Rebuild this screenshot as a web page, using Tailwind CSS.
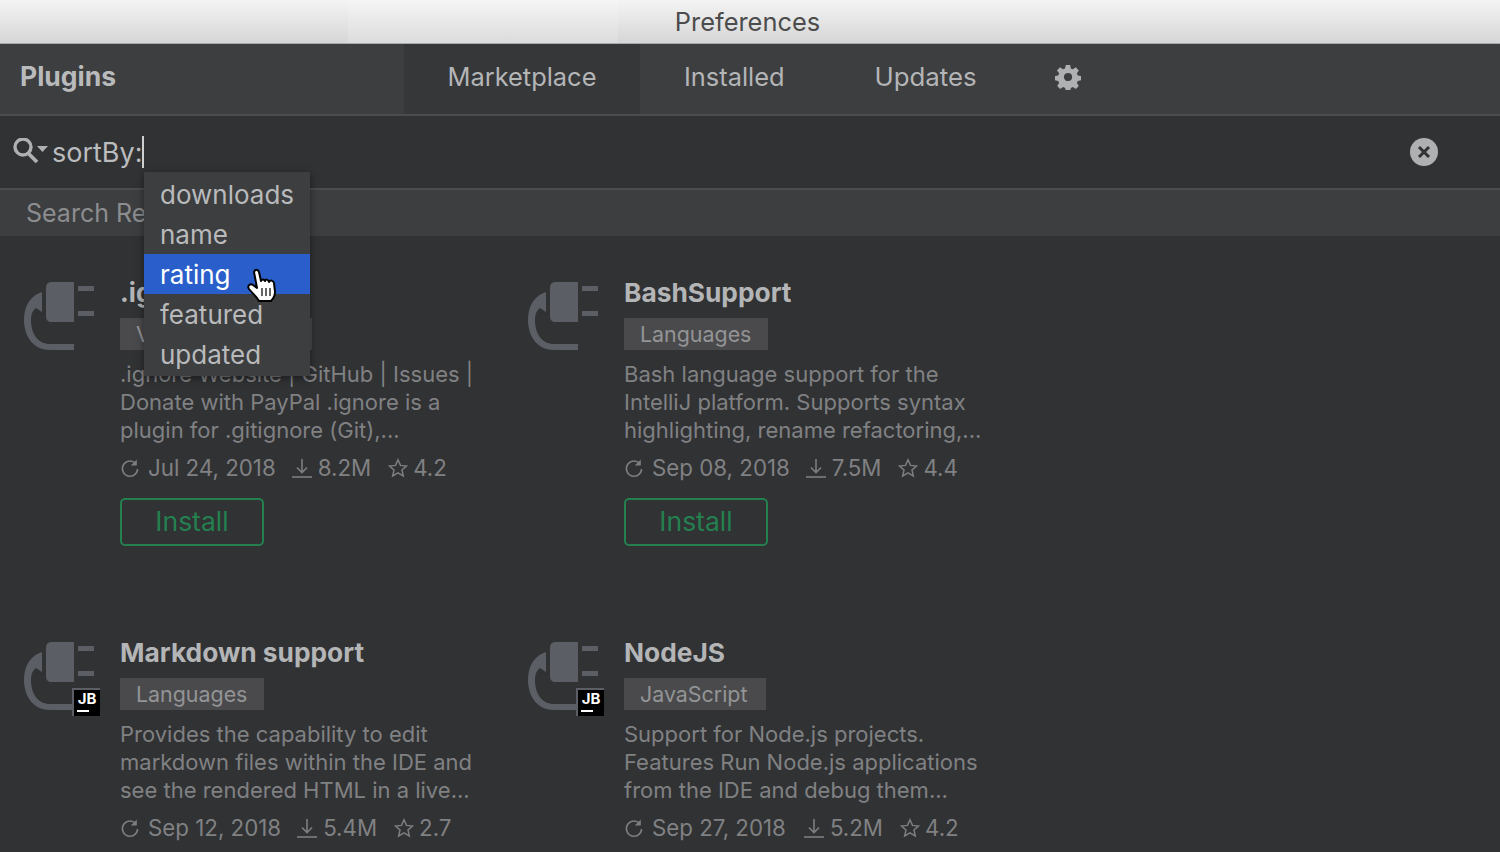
<!DOCTYPE html>
<html lang="en">
  <head>
    <meta charset="UTF-8" />
    <title>Preferences</title>
    <script src="https://cdn.jsdelivr.net/npm/@tailwindcss/browser@4"></script>
  </head>
  <body class="bg-[#313234] font-['Inter','Noto_Sans',sans-serif]">
    <svg class="hidden">
      <symbol id="plug" viewBox="0 0 70 68">
        <path d="M28 0h22v40H28c-4 0-6-2-6-6V6c0-4 2-6 6-6z" fill="#5b5f65" />
        <path d="M54 4h16v5H54zM54 29h16v5H54z" fill="#5b5f65" />
        <path d="M18 10C6 14 0 24 0 38c0 17 10 30 26 30h24v-6H26C14 62 7 52 7 38c0-6 2-10 5-12l6 4z" fill="#5b5f65" />
      </symbol>
      <symbol id="refresh" viewBox="0 0 20 20">
        <path d="M15.600 5.500A7.600 7.600 0 1 0 17.600 11" fill="none" stroke="#7d7e80" stroke-width="1.600" />
        <path d="M16.800 1.500v6h-6z" fill="#7d7e80" />
      </symbol>
      <symbol id="download" viewBox="0 0 20 20">
        <path d="M10 1v13M5 9.500l5 5 5-5" fill="none" stroke="#7d7e80" stroke-width="1.600" />
        <path d="M0 19h20" stroke="#7d7e80" stroke-width="1.600" />
      </symbol>
      <symbol id="star" viewBox="0 0 20 20">
        <path d="M10 1.800l2.500 5.600 6 .6-4.500 4 1.300 6-5.300-3.100-5.300 3.100 1.300-6-4.500-4 6-.6z" fill="none" stroke="#7d7e80" stroke-width="1.500" />
      </symbol>
    </svg>

    <div class="relative h-[852px] w-[1500px] overflow-hidden">
      <!-- title bar -->
      <header class="relative flex h-[44px] items-center justify-center bg-gradient-to-b from-[#f4f4f4] to-[#d6d6d6] border-b border-[#a9a9a9] pt-[2px]">
        <div class="absolute left-[348px] top-0 h-[43px] w-[270px] bg-white/15"></div>
        <span class="relative mr-[5px] text-[25.400px] text-[#4c4c4c]">Preferences</span>
      </header>

      <!-- tabs -->
      <nav class="flex h-[72px] bg-[#3d3e40] border-b-2 border-[#4b4c4e] text-[25.400px] text-[#b4b5b7]">
        <div class="flex w-[404px] items-center pb-[4px] pl-[20px] text-[26.500px] font-bold text-[#b9babc]">Plugins</div>
        <div class="flex w-[236px] items-center justify-center bg-[#363739] pb-[4px]">Marketplace</div>
        <div class="flex items-center pb-[4px] pl-[44px]">Installed</div>
        <div class="flex items-center pb-[4px] pl-[90px] text-[25.800px]">Updates</div>
        <div class="flex items-center pb-[4px] pl-[78px]">
          <svg width="26" height="26" viewBox="0 0 24 24" fill="#afb0b2">
            <path fill-rule="evenodd" d="M10 1h4l.6 3.100 1.900.8 2.700-1.800 2.800 2.800-1.800 2.700.8 1.900 3 .6v4l-3 .6-.8 1.900 1.800 2.700-2.800 2.800-2.700-1.800-1.900.8-.6 3h-4l-.6-3-1.900-.8-2.700 1.800-2.800-2.800 1.800-2.700-.8-1.900-3-.6v-4l3-.6.8-1.900L1.800 5.900l2.800-2.800 2.700 1.800 1.900-.8zM12 8.200a3.800 3.800 0 1 0 0 7.600 3.800 3.800 0 0 0 0-7.600z" />
          </svg>
        </div>
      </nav>

      <!-- search -->
      <div class="flex h-[74px] items-center border-b-2 border-[#4b4c4e] pl-[13px] pr-[62px]">
        <svg width="36" height="28" viewBox="0 0 36 28" fill="none">
          <circle cx="10" cy="9" r="8" stroke="#afb0b2" stroke-width="3.400" />
          <path d="M15 15l9 9" stroke="#afb0b2" stroke-width="3.800" />
          <path d="M24 8h11l-5.500 6z" fill="#afb0b2" />
        </svg>
        <span class="ml-[3px] pt-[2px] text-[27px] text-[#bbbcbe]">sortBy:</span>
        <span class="h-[32px] w-[2px] bg-[#d0d0d0]"></span>
        <svg width="28" height="28" viewBox="0 0 28 28" class="ml-auto">
          <circle cx="14" cy="14" r="14" fill="#afb0b2" />
          <path d="M9 9l10 10M19 9L9 19" stroke="#313234" stroke-width="3" />
        </svg>
      </div>

      <div class="flex h-[46px] items-center bg-[#3d3e40] pl-[26px] pt-[2px] text-[25px] text-[#8c8d8f]">Search Results</div>

      <!-- plugin grid -->
      <main class="grid grid-cols-[504px_504px] auto-rows-[360px] pt-[36px]">
        <article class="flex">
          <div class="relative ml-[24px] h-[78px] w-[96px]"><svg width="70" height="68" class="mt-[10px]"><use href="#plug" /></svg></div>
          <div class="w-[370px]">
            <h2 class="mt-[3px] text-[26.300px] leading-[36px] font-bold text-[#b4b5b7]">.ignore</h2>
            <span class="mt-[7px] block h-[32px] w-[192px] bg-[#4a4a4c] pl-[16px] text-[21.400px] leading-[32px] text-[#939496]">VCS Integration</span>
            <p class="mt-[10px] text-[22px] leading-[28px] text-[#808183]">.ignore Website | GitHub | Issues | Donate with PayPal .ignore is a plugin for .gitignore (Git),...</p>
            <div class="mt-[8px] flex h-[32px] items-center text-[22.300px] text-[#808183]">
              <svg width="20" height="20" class="mr-[8px]"><use href="#refresh" /></svg>Jul 24, 2018
              <svg width="20" height="20" class="mr-[6px] ml-[16px]"><use href="#download" /></svg>8.2M
              <svg width="20" height="20" class="mr-[5px] ml-[17px]"><use href="#star" /></svg>4.2
            </div>
            <button class="mt-[14px] block h-[48px] w-[144px] rounded-[5px] border-2 border-[#24804f] text-[26.500px] text-[#24804f]">Install</button>
          </div>
        </article>
        <article class="flex">
          <div class="relative ml-[24px] h-[78px] w-[96px]"><svg width="70" height="68" class="mt-[10px]"><use href="#plug" /></svg></div>
          <div class="w-[370px]">
            <h2 class="mt-[3px] text-[26.300px] leading-[36px] font-bold text-[#b4b5b7]">BashSupport</h2>
            <span class="mt-[7px] block h-[32px] w-[144px] bg-[#4a4a4c] pl-[16px] text-[21.400px] leading-[32px] text-[#939496]">Languages</span>
            <p class="mt-[10px] text-[22px] leading-[28px] text-[#808183]">Bash language support for the IntelliJ platform. Supports syntax highlighting, rename refactoring,...</p>
            <div class="mt-[8px] flex h-[32px] items-center text-[22.300px] text-[#808183]">
              <svg width="20" height="20" class="mr-[8px]"><use href="#refresh" /></svg>Sep 08, 2018
              <svg width="20" height="20" class="mr-[6px] ml-[16px]"><use href="#download" /></svg>7.5M
              <svg width="20" height="20" class="mr-[5px] ml-[17px]"><use href="#star" /></svg>4.4
            </div>
            <button class="mt-[14px] block h-[48px] w-[144px] rounded-[5px] border-2 border-[#24804f] text-[26.500px] text-[#24804f]">Install</button>
          </div>
        </article>
        <article class="flex">
          <div class="relative ml-[24px] h-[78px] w-[96px]">
            <svg width="70" height="68" class="mt-[10px]"><use href="#plug" /></svg>
            <span class="absolute left-[48px] top-[56px] flex h-[28px] w-[28px] flex-col items-center border-t-2 border-l-2 border-[#5b5f65] bg-black pt-[1px] text-[15px] leading-[16px] font-bold text-white">JB<span class="mt-[3px] mr-[8px] h-[2px] w-[12px] bg-white"></span></span>
          </div>
          <div class="w-[370px]">
            <h2 class="mt-[3px] text-[26.300px] leading-[36px] font-bold text-[#b4b5b7]">Markdown support</h2>
            <span class="mt-[7px] block h-[32px] w-[144px] bg-[#4a4a4c] pl-[16px] text-[21.400px] leading-[32px] text-[#939496]">Languages</span>
            <p class="mt-[10px] text-[22px] leading-[28px] text-[#808183]">Provides the capability to edit markdown files within the IDE and see the rendered HTML in a live...</p>
            <div class="mt-[8px] flex h-[32px] items-center text-[22.300px] text-[#808183]">
              <svg width="20" height="20" class="mr-[8px]"><use href="#refresh" /></svg>Sep 12, 2018
              <svg width="20" height="20" class="mr-[6px] ml-[16px]"><use href="#download" /></svg>5.4M
              <svg width="20" height="20" class="mr-[5px] ml-[17px]"><use href="#star" /></svg>2.7
            </div>
          </div>
        </article>
        <article class="flex">
          <div class="relative ml-[24px] h-[78px] w-[96px]">
            <svg width="70" height="68" class="mt-[10px]"><use href="#plug" /></svg>
            <span class="absolute left-[48px] top-[56px] flex h-[28px] w-[28px] flex-col items-center border-t-2 border-l-2 border-[#5b5f65] bg-black pt-[1px] text-[15px] leading-[16px] font-bold text-white">JB<span class="mt-[3px] mr-[8px] h-[2px] w-[12px] bg-white"></span></span>
          </div>
          <div class="w-[370px]">
            <h2 class="mt-[3px] text-[26.300px] leading-[36px] font-bold text-[#b4b5b7]">NodeJS</h2>
            <span class="mt-[7px] block h-[32px] w-[142px] bg-[#4a4a4c] pl-[16px] text-[21.400px] leading-[32px] text-[#939496]">JavaScript</span>
            <p class="mt-[10px] text-[22px] leading-[28px] text-[#808183]">Support for Node.js projects. Features Run Node.js applications from the IDE and debug them...</p>
            <div class="mt-[8px] flex h-[32px] items-center text-[22.300px] text-[#808183]">
              <svg width="20" height="20" class="mr-[8px]"><use href="#refresh" /></svg>Sep 27, 2018
              <svg width="20" height="20" class="mr-[6px] ml-[18px]"><use href="#download" /></svg>5.2M
              <svg width="20" height="20" class="mr-[5px] ml-[17px]"><use href="#star" /></svg>4.2
            </div>
          </div>
        </article>
      </main>

      <!-- completion popup -->
      <ul class="absolute left-[144px] top-[172px] w-[166px] bg-[#3d3e40] py-[2px] text-[26px] leading-[41px] text-[#b9babc] shadow-[0_2px_8px_rgba(0,0,0,0.45)]">
        <li class="h-[40px] pl-[16px]">downloads</li>
        <li class="h-[40px] pl-[16px]">name</li>
        <li class="h-[40px] bg-[#2a5fcb] pl-[16px] text-white">rating</li>
        <li class="h-[40px] pl-[16px]">featured</li>
        <li class="h-[40px] pl-[16px]">updated</li>
      </ul>

      <!-- hand cursor -->
      <svg class="absolute left-[247px] top-[268px]" width="32" height="36" viewBox="0 0 32 36">
        <path d="M7 4C8 1 11 1 12 4l2 9c1-2 3-2 4 0 1-2 3-2 4 1 1-2 4-2 5 1l1 9c0 4-2 7-4 9H12c-2-4-6-7-10-12-2-3 1-6 4-4l4 3z" fill="#fff" stroke="#000" stroke-width="2" stroke-linejoin="round" />
        <path d="M15 20v8M19 20v8M23 20v8" stroke="#333" stroke-width="1.500" />
      </svg>
    </div>
  </body>
</html>
